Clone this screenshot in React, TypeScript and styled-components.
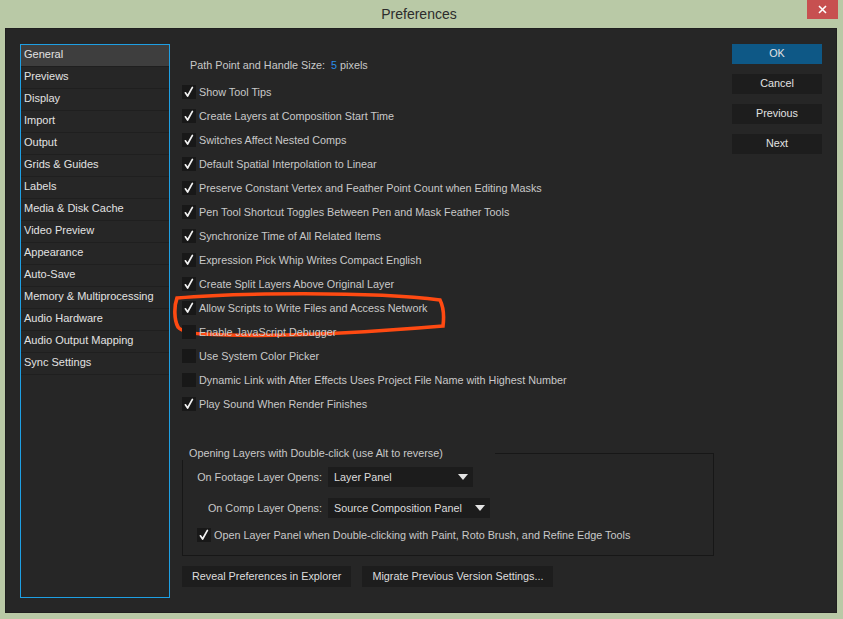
import { FC } from "react";
import styled, { createGlobalStyle } from "styled-components";

const FONT = `"Liberation Sans", Arial, sans-serif`;

const GlobalStyle = createGlobalStyle`
  html, body {
    margin: 0;
    padding: 0;
    background: #b9c9a6;
  }
  body {
    font-family: ${FONT};
    font-size: 10.8px;
  }
`;

const SIDEBAR_ITEMS = [
  "General",
  "Previews",
  "Display",
  "Import",
  "Output",
  "Grids & Guides",
  "Labels",
  "Media & Disk Cache",
  "Video Preview",
  "Appearance",
  "Auto-Save",
  "Memory & Multiprocessing",
  "Audio Hardware",
  "Audio Output Mapping",
  "Sync Settings",
];

type CheckItem = { label: string; checked: boolean; marked?: boolean };

const CHECKS: CheckItem[] = [
  { label: "Show Tool Tips", checked: true },
  { label: "Create Layers at Composition Start Time", checked: true },
  { label: "Switches Affect Nested Comps", checked: true },
  { label: "Default Spatial Interpolation to Linear", checked: true },
  { label: "Preserve Constant Vertex and Feather Point Count when Editing Masks", checked: true },
  { label: "Pen Tool Shortcut Toggles Between Pen and Mask Feather Tools", checked: true },
  { label: "Synchronize Time of All Related Items", checked: true },
  { label: "Expression Pick Whip Writes Compact English", checked: true },
  { label: "Create Split Layers Above Original Layer", checked: true },
  { label: "Allow Scripts to Write Files and Access Network", checked: true, marked: true },
  { label: "Enable JavaScript Debugger", checked: false },
  { label: "Use System Color Picker", checked: false },
  { label: "Dynamic Link with After Effects Uses Project File Name with Highest Number", checked: false },
  { label: "Play Sound When Render Finishes", checked: true },
];

const Box: FC<{ checked: boolean }> = ({ checked }) => (
  <SBox>
    {checked && (
      <svg width="14" height="14" viewBox="0 0 14 14">
        <path d="M3.4 7.8 L5.6 11 L10.4 2.4" fill="none" stroke="#f2f2f2" strokeWidth="1.7" strokeLinecap="round" strokeLinejoin="round" />
      </svg>
    )}
  </SBox>
);

const Dropdown: FC<{ value: string; width: number }> = ({ value, width }) => (
  <SSelect $width={width}>
    <span>{value}</span>
    <svg width="10" height="6" viewBox="0 0 10 6">
      <path d="M0 0 H10 L5 6 Z" fill="#e4e4e4" />
    </svg>
  </SSelect>
);

export default function App() {
  return (
    <>
      <GlobalStyle />
      <SFrame>
        <STitleBar>
          <span />
          <STitle>Preferences</STitle>
          <SClose>
            <svg width="9" height="9" viewBox="0 0 9 9">
              <path d="M1 1 L8 8 M8 1 L1 8" stroke="#fff" strokeWidth="1.6" />
            </svg>
          </SClose>
        </STitleBar>

        <SPanel>
          <SSidebar>
            {SIDEBAR_ITEMS.map((item, i) => (
              <SSideItem key={item} $active={i === 0}>
                {item}
              </SSideItem>
            ))}
          </SSidebar>

          <SMain>
            <SSizeRow>
              Path Point and Handle Size:<SValue>5</SValue>pixels
            </SSizeRow>

            <SCheckList>
              {CHECKS.map((c) => (
                <SCheckRow key={c.label}>
                  <Box checked={c.checked} />
                  <span>{c.label}</span>
                  {c.marked && (
                    <SMark width="280" height="54" viewBox="0 0 280 54">
                      <path
                        d="M6 39 C2 32 2 18 5 10 C60 5 200 3 268 12 C272 20 272 30 271 38 C200 44 100 50 30 46 C16 45 9 43 6 39"
                        fill="none"
                        stroke="#ff4a12"
                        strokeWidth="3.6"
                        strokeLinecap="round"
                      />
                    </SMark>
                  )}
                </SCheckRow>
              ))}
            </SCheckList>

            <SGroup>
              <SLegend>Opening Layers with Double-click (use Alt to reverse)</SLegend>
              <SGroupGrid>
                <SLabel>On Footage Layer Opens:</SLabel>
                <Dropdown value="Layer Panel" width={145} />
                <SLabel>On Comp Layer Opens:</SLabel>
                <Dropdown value="Source Composition Panel" width={162} />
              </SGroupGrid>
              <SGroupCheck>
                <Box checked />
                <span>Open Layer Panel when Double-clicking with Paint, Roto Brush, and Refine Edge Tools</span>
              </SGroupCheck>
            </SGroup>

            <SFooter>
              <SButton>Reveal Preferences in Explorer</SButton>
              <SButton>Migrate Previous Version Settings...</SButton>
            </SFooter>
          </SMain>

          <SActions>
            <SActionButton $primary>OK</SActionButton>
            <SActionButton>Cancel</SActionButton>
            <SActionButton>Previous</SActionButton>
            <SActionButton>Next</SActionButton>
          </SActions>
        </SPanel>
      </SFrame>
    </>
  );
}

const SFrame = styled.div`
  height: 619px;
  display: flex;
  flex-direction: column;
  background: #b9c9a6;
`;

const STitleBar = styled.div`
  height: 28px;
  display: grid;
  grid-template-columns: 1fr auto 1fr;
  padding-right: 5px;
`;

const STitle = styled.div`
  font-size: 14px;
  color: #2c2c2c;
  line-height: 28px;
`;

const SClose = styled.div`
  justify-self: end;
  width: 31px;
  height: 19px;
  background: #c75050;
  display: flex;
  align-items: center;
  justify-content: center;
`;

const SPanel = styled.div`
  flex: 1;
  margin: 0 6px 6px 5px;
  background: #262626;
  border: 1px solid #1f1f1f;
  display: flex;
  padding: 15px 14px 14px 14px;
  color: #c9c9c9;
`;

const SSidebar = styled.div`
  width: 150px;
  box-sizing: border-box;
  border: 1px solid #1e9fe3;
  background: #262626;
`;

const SSideItem = styled.div<{ $active?: boolean }>`
  height: 21px;
  line-height: 19px;
  padding-left: 3px;
  color: #e2e2e2;
  font-size: 11px;
  border-bottom: 1px solid #1f1f1f;
  background: ${(p) => (p.$active ? "#3e3e3e" : "transparent")};
`;

const SMain = styled.div`
  width: 532px;
  margin-left: 12px;
  display: flex;
  flex-direction: column;
`;

const SSizeRow = styled.div`
  margin-top: 9px;
  height: 24px;
  line-height: 24px;
  padding-left: 8px;
  color: #c9c9c9;
`;

const SValue = styled.span`
  color: #2a8ce8;
  margin: 0 3px 0 6px;
`;

const SCheckList = styled.div`
  margin-top: 3px;
  display: flex;
  flex-direction: column;
`;

const SCheckRow = styled.div`
  position: relative;
  height: 24px;
  display: flex;
  align-items: center;
  gap: 3px;
  white-space: nowrap;
`;

const SBox = styled.span`
  width: 14px;
  height: 14px;
  flex: none;
  background: #181818;
  display: flex;
`;

const SMark = styled.svg`
  position: absolute;
  left: -10px;
  top: -8px;
  overflow: visible;
  pointer-events: none;
`;

const SGroup = styled.fieldset`
  margin: 30px 0 0;
  padding: 0 0 10px;
  border: 1px solid #171717;
  min-inline-size: 0;
`;

const SLegend = styled.legend`
  padding: 0 52px 0 7px;
  margin-left: -1px;
  line-height: 14px;
  color: #c9c9c9;
`;

const SGroupGrid = styled.div`
  display: grid;
  grid-template-columns: 139px auto;
  column-gap: 6px;
  row-gap: 11px;
  justify-content: start;
  align-items: center;
  margin-top: 7px;
`;

const SLabel = styled.div`
  text-align: right;
`;

const SSelect = styled.div<{ $width: number }>`
  width: ${(p) => p.$width}px;
  height: 20px;
  box-sizing: border-box;
  background: #1c1c1c;
  color: #dcdcdc;
  display: flex;
  align-items: center;
  justify-content: space-between;
  padding: 0 5px 0 6px;
`;

const SGroupCheck = styled.div`
  margin-top: 7px;
  height: 20px;
  padding-left: 14px;
  display: flex;
  align-items: center;
  gap: 3px;
`;

const SFooter = styled.div`
  margin-top: 10px;
  display: flex;
  gap: 11px;
`;

const SButton = styled.div`
  height: 21px;
  line-height: 21px;
  padding: 0 10px;
  background: #1d1d1d;
  color: #dedede;
`;

const SActions = styled.div`
  margin-left: auto;
  width: 90px;
  display: flex;
  flex-direction: column;
  gap: 10px;
`;

const SActionButton = styled.div<{ $primary?: boolean }>`
  height: 20px;
  line-height: 19px;
  text-align: center;
  background: ${(p) => (p.$primary ? "#0e5886" : "#1d1d1d")};
  color: #e2e2e2;
`;
